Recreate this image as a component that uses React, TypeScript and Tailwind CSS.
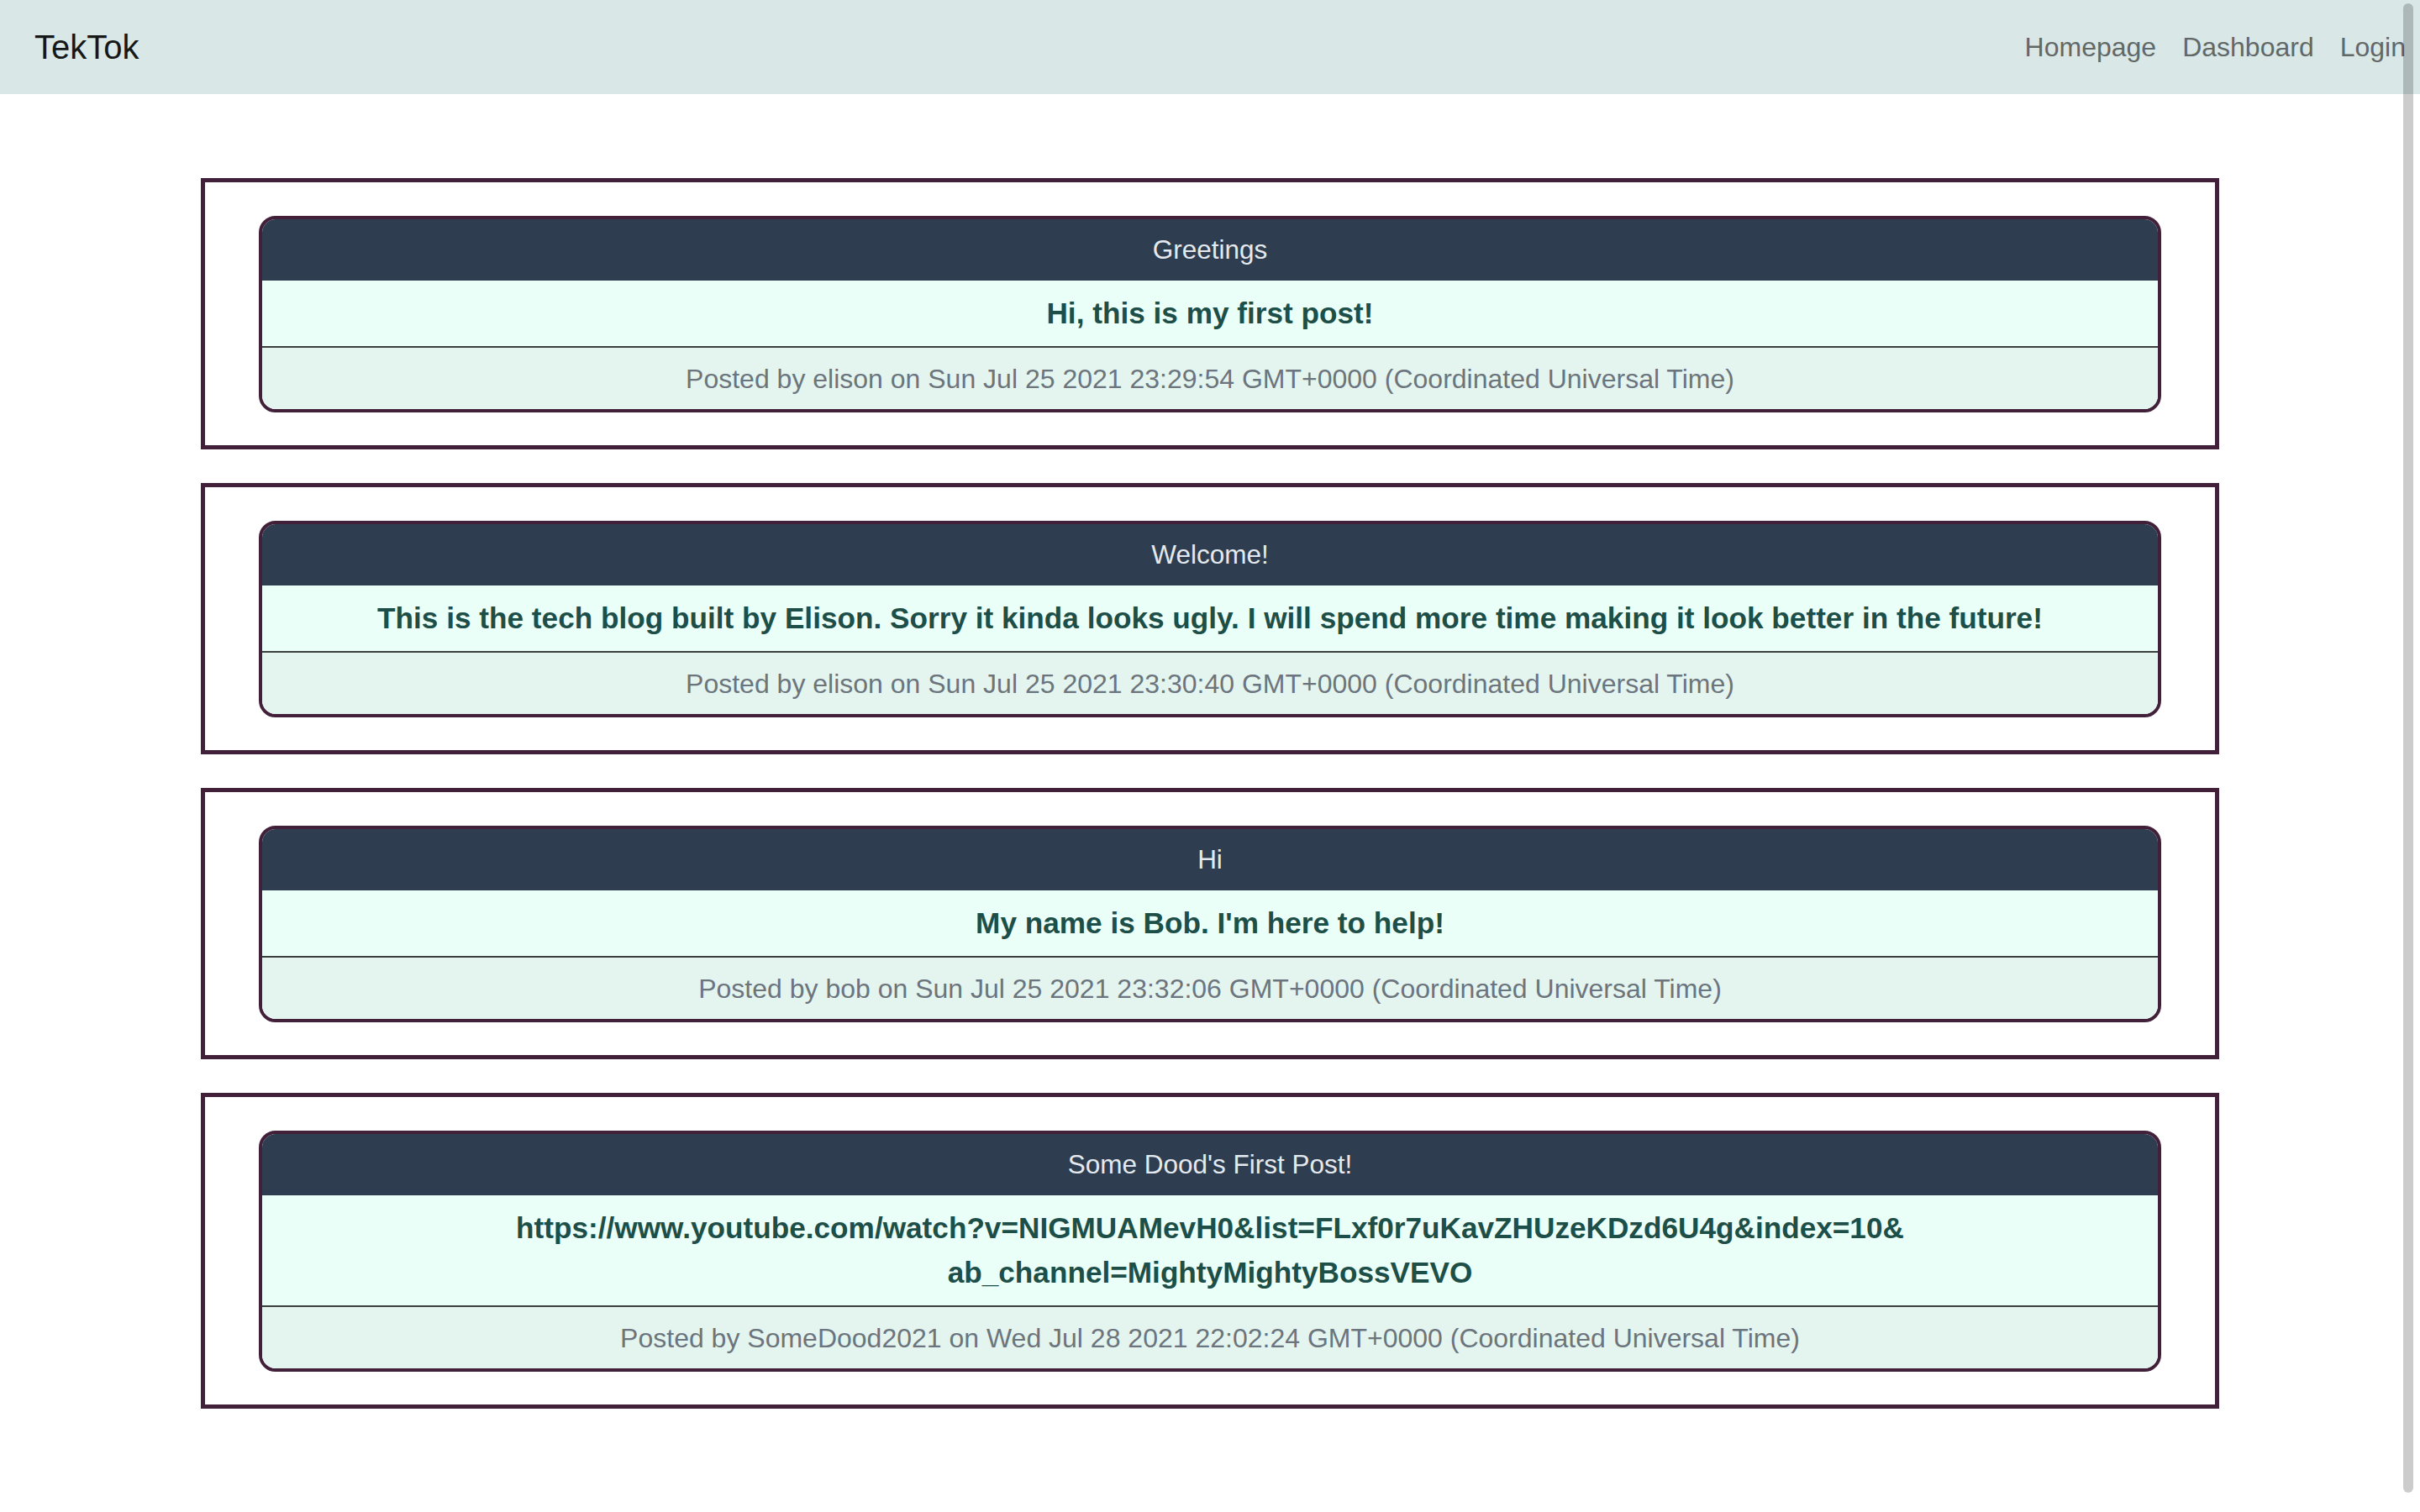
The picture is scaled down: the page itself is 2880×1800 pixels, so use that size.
import React from "react";

type Post = {
	id: number;
	title: string;
	body: React.ReactNode;
	author: string;
	date: string;
};

const posts: Post[] = [
	{
		id: 1,
		title: "Greetings",
		body: "Hi, this is my first post!",
		author: "elison",
		date: "Sun Jul 25 2021 23:29:54 GMT+0000 (Coordinated Universal Time)",
	},
	{
		id: 2,
		title: "Welcome!",
		body: "This is the tech blog built by Elison. Sorry it kinda looks ugly. I will spend more time making it look better in the future!",
		author: "elison",
		date: "Sun Jul 25 2021 23:30:40 GMT+0000 (Coordinated Universal Time)",
	},
	{
		id: 3,
		title: "Hi",
		body: "My name is Bob. I'm here to help!",
		author: "bob",
		date: "Sun Jul 25 2021 23:32:06 GMT+0000 (Coordinated Universal Time)",
	},
	{
		id: 4,
		title: "Some Dood's First Post!",
		body: (
			<>
				{"https://www.youtube.com/watch?v=NIGMUAMevH0&list=FLxf0r7uKavZHUzeKDzd6U4g&index=10&"}
				<br />
				{"ab_channel=MightyMightyBossVEVO"}
			</>
		),
		author: "SomeDood2021",
		date: "Wed Jul 28 2021 22:02:24 GMT+0000 (Coordinated Universal Time)",
	},
];

const PostCard = ({ post }: { post: Post }) => (
	<div className="border-[5px] border-[#43203a] px-[64px] pt-[40px] pb-[39px] mb-[40px]">
		<div className="border-4 border-[#43203a] rounded-[20px] overflow-hidden text-center">
			<div className="bg-[#2e3e50] text-[#e3e9ee] text-[31.5px] leading-[1.5] py-[13px]">
				{post.title}
			</div>
			<div className="bg-[#ebfff9] text-[#1d4f48] font-bold text-[35.2px] leading-[1.5] pt-[13px] pb-[12px] px-[32px]">
				{post.body}
			</div>
			<div className="bg-[#e4f5f0] border-t-2 border-[#3b403e] text-[#6c757d] text-[32px] leading-[1.5] pt-[13px] pb-[12px]">
				Posted by {post.author} on {post.date}
			</div>
		</div>
	</div>
);

export default function App() {
	return (
		<div className="min-h-screen bg-white font-['Liberation_Sans',Arial,sans-serif]">
			<nav className="h-[112px] bg-[#d9e8e7] flex items-center justify-between pl-[41px] pr-[17px]">
				<span className="text-[40px] leading-[1.5] text-[#161717]">TekTok</span>
				<div className="flex gap-[31px] text-[32px] leading-[1.5] text-[#626868]">
					<a href="#">Homepage</a>
					<a href="#">Dashboard</a>
					<a href="#">Login</a>
				</div>
			</nav>

			<main className="pt-[100px]">
				<div className="w-[2402px] mx-auto">
					{posts.map((post) => (
						<PostCard key={post.id} post={post} />
					))}
				</div>
			</main>

			{/* overlay scrollbar thumb */}
			<div className="fixed top-[4px] right-[8px] w-[12px] h-[1773px] rounded-full bg-black/20" />
		</div>
	);
}
